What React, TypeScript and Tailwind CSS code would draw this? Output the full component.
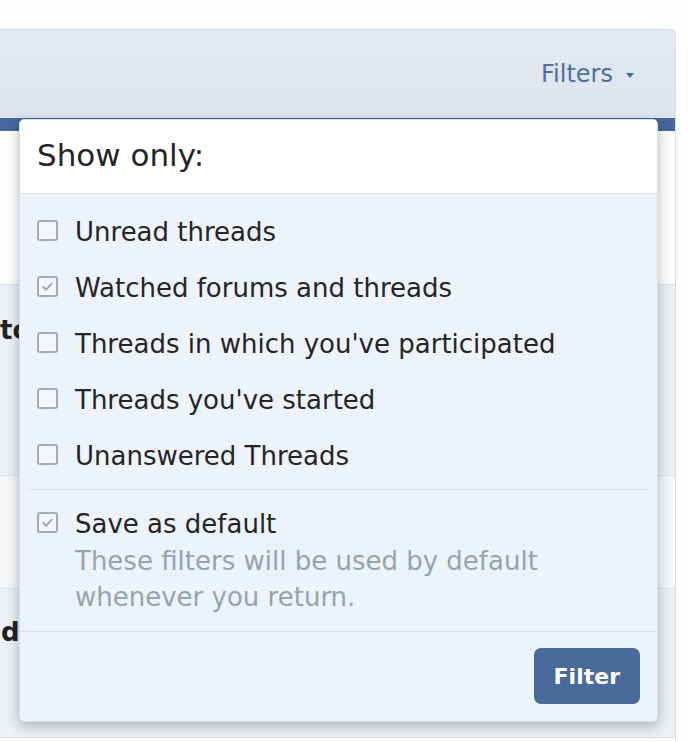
import React from 'react';

function Box({ checked }: { checked?: boolean }) {
  return (
    <span className="mt-[2px] flex h-[21px] w-[21px] shrink-0 items-center justify-center rounded-[3px] border-2 border-[#a3abb5] bg-[#f4f7fb]">
      {checked && (
        <svg viewBox="0 0 16 16" className="h-[15px] w-[15px]" fill="none" stroke="#9ea6b1" strokeWidth="2" strokeLinecap="round" strokeLinejoin="round">
          <path d="M3.5 8.5l3 3 6-6.5" />
        </svg>
      )}
    </span>
  );
}

export default function App() {
  const options = [
    { label: 'Unread threads', checked: false },
    { label: 'Watched forums and threads', checked: true },
    { label: "Threads in which you've participated", checked: false },
    { label: "Threads you've started", checked: false },
    { label: 'Unanswered Threads', checked: false }
  ];

  return (
    <div className="relative h-[742px] w-[688px] overflow-hidden bg-[#fefefe] font-['DejaVu_Sans',sans-serif] text-[#252525]">
      <div className="ml-[-1px] mr-[12px] mt-[29px] overflow-hidden rounded-tr-[5px] border border-[#d6dfea]">
        <div className="flex h-[88px] items-center justify-end bg-gradient-to-b from-[#e3eaf3] to-[#dce4ee] pr-[40px]">
          <span className="text-[24px] text-[#4f6e9e]">Filters</span>
          <svg viewBox="0 0 10 6" className="ml-[12px] mt-[2px] h-[5px] w-[10px]" fill="#4f6e9e">
            <path d="M0 0h10L5 6z" />
          </svg>
        </div>
        <div className="h-[13px] bg-[#47669a]" />
        <div className="h-[153px] bg-white" />
        <div className="flex h-[191px] items-start border-t border-[#d6dfea] bg-[#edf1f6] pt-[26px]">
          <span className="text-[26px] font-bold text-[#222]">to</span>
        </div>
        <div className="h-[113px] border-t border-[#d6dfea] bg-[#f7f8fa]" />
        <div className="flex h-[149px] items-start border-t border-[#d6dfea] bg-[#edf1f6] pt-[24px]">
          <span className="ml-[1px] text-[26px] font-bold text-[#222]">d</span>
        </div>
        <div className="h-[20px] border-t border-[#d6dfea] bg-[#fefefe]" />
      </div>

      <div className="absolute left-[19px] top-[119px] w-[639px] overflow-hidden rounded-[5px] border border-[#d6dfea] bg-[#edf3fa] shadow-[0_4px_14px_rgba(0,0,0,0.28)]">
        <div className="flex h-[74px] items-center border-b border-[#d6dfea] bg-white px-[17px] pb-[2px] text-[31px]">
          Show only:
        </div>
        <div className="px-[17px] pt-[24px]">
          {options.map(o => (
            <label key={o.label} className="flex h-[56px] gap-[17px] text-[26px] leading-[28px]">
              <Box checked={o.checked} />
              <span>{o.label}</span>
            </label>
          ))}
        </div>
        <div className="mx-[9px] mt-[-9px] border-t border-[#d6dfea]" />
        <div className="flex gap-[17px] px-[17px] pb-[16px] pt-[20px] text-[26px]">
          <Box checked />
          <div className="leading-[36px]">
            <div className="leading-[28px]">Save as default</div>
            <div className="mt-[5px] text-[#9aa2ad]">
              These filters will be used by default
              <br />
              whenever you return.
            </div>
          </div>
        </div>
        <div className="flex justify-end border-t border-[#d6dfea] px-[17px] pb-[17px] pt-[16px]">
          <button className="h-[56px] rounded-[7px] bg-[#4a6a99] px-[20px] text-[22px] font-bold text-white">
            Filter
          </button>
        </div>
      </div>
    </div>
  );
}
